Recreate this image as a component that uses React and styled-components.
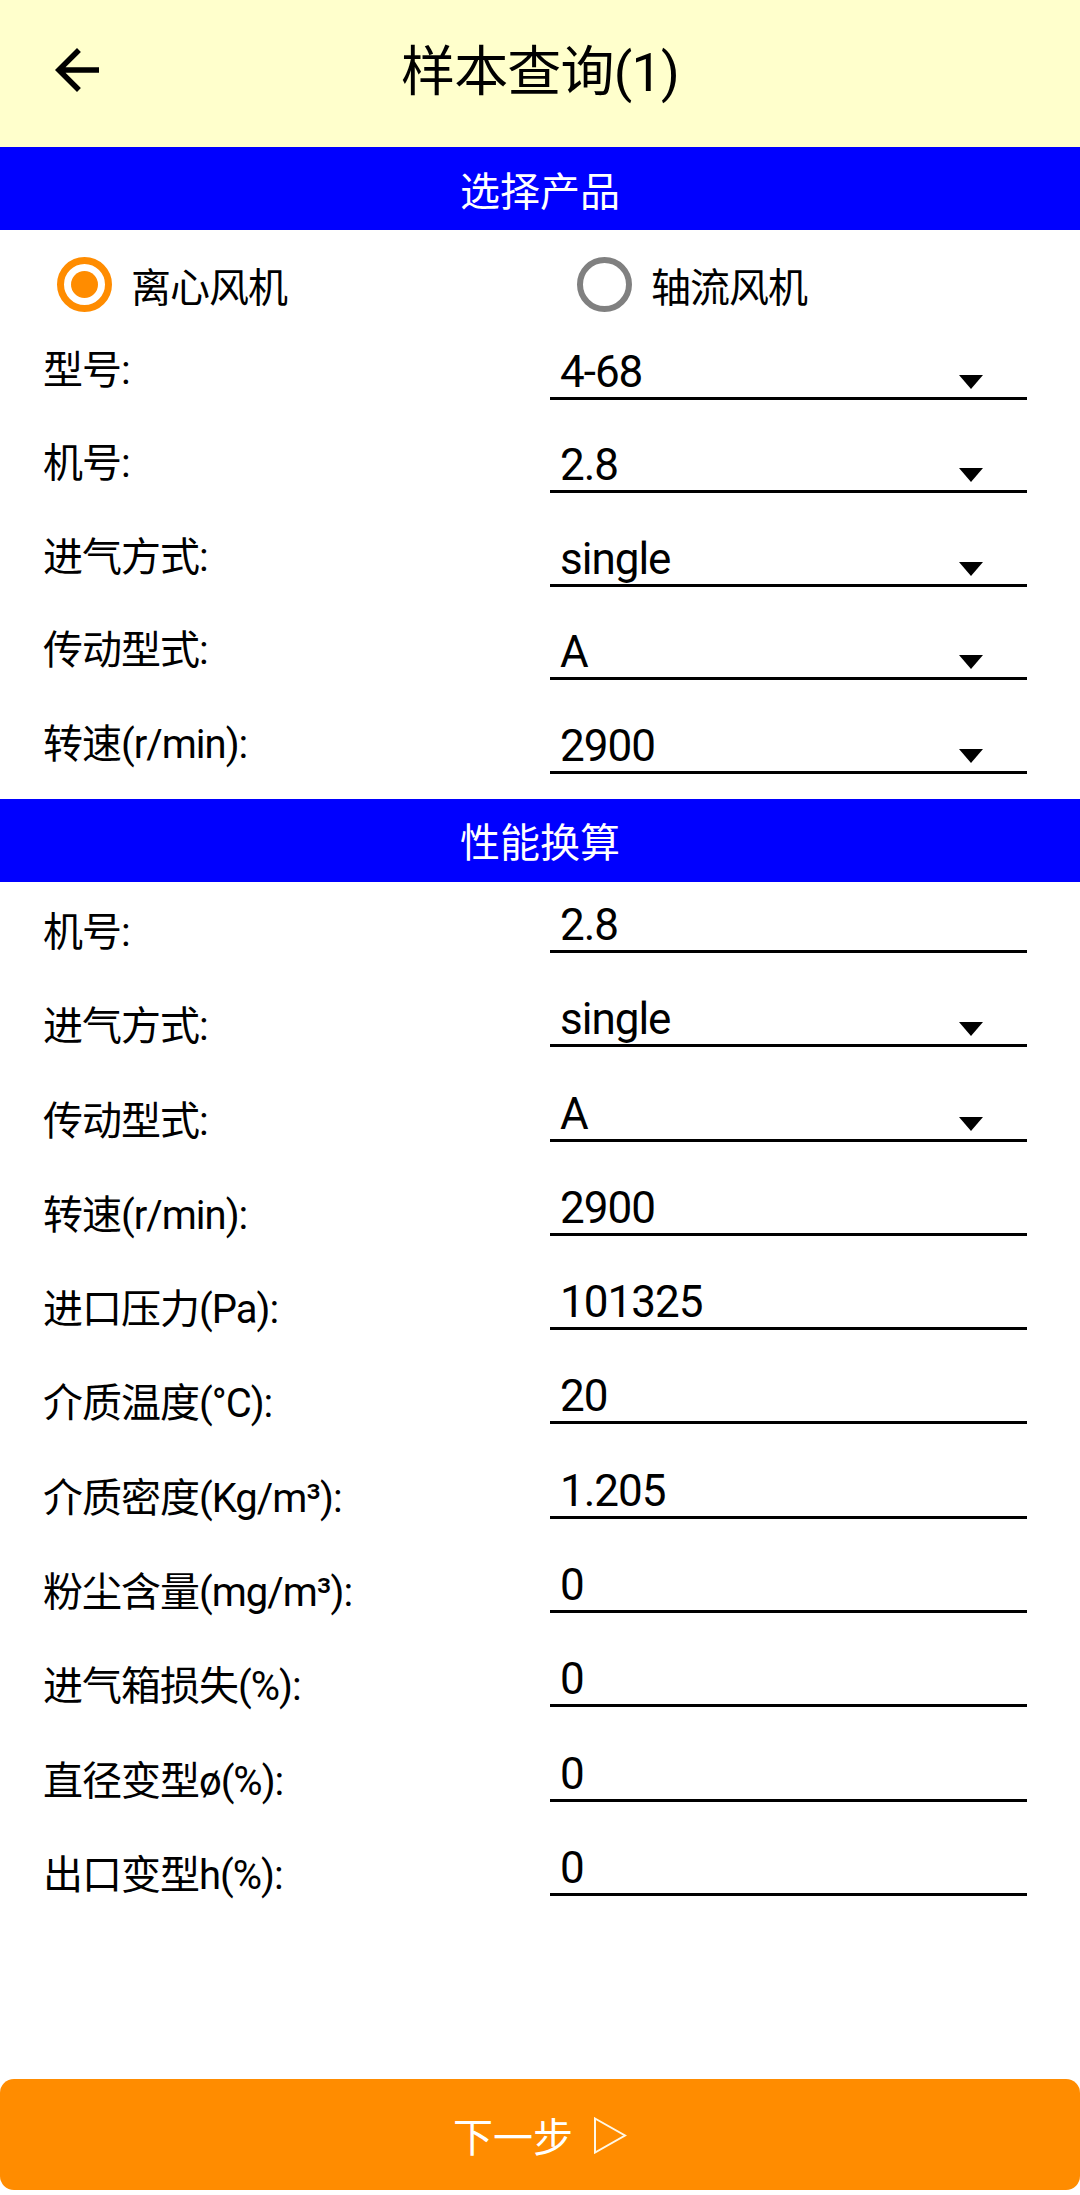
import React, { useState } from 'react';
import styled, { createGlobalStyle } from 'styled-components';

const GlobalStyle = createGlobalStyle`
  * { box-sizing: border-box; }
  body {
    margin: 0;
    background: #fff;
    font-family: Roboto, "Noto Sans CJK SC", sans-serif;
    color: #000;
  }
`;

const selectRows = [
  { label: '型号:', value: '4-68', select: true },
  { label: '机号:', value: '2.8', select: true },
  { label: '进气方式:', value: 'single', select: true },
  { label: '传动型式:', value: 'A', select: true },
  { label: '转速(r/min):', value: '2900', select: true },
];

const convertRows = [
  { label: '机号:', value: '2.8' },
  { label: '进气方式:', value: 'single', select: true },
  { label: '传动型式:', value: 'A', select: true },
  { label: '转速(r/min):', value: '2900' },
  { label: '进口压力(Pa):', value: '101325' },
  { label: '介质温度(°C):', value: '20' },
  { label: '介质密度(Kg/m³):', value: '1.205' },
  { label: '粉尘含量(mg/m³):', value: '0' },
  { label: '进气箱损失(%):', value: '0' },
  { label: '直径变型ø(%):', value: '0' },
  { label: '出口变型h(%):', value: '0' },
];

const BackIcon = () => (
  <svg width="66" height="66" viewBox="0 0 24 24" fill="#000">
    <path d="M20 11H7.83l5.59-5.59L12 4l-8 8 8 8 1.41-1.41L7.83 13H20v-2z" />
  </svg>
);

const NextIcon = () => (
  <svg width="34" height="37" viewBox="0 0 34 37">
    <polygon points="2,1.5 32,18.5 2,35.5" fill="none" stroke="#fff8e6" strokeWidth="2" />
  </svg>
);

const FormRow = ({ label, value, select, section }) => (
  <Row $section={section}>
    <Label $section={section}>{label}</Label>
    <Field>
      <Value>{value}</Value>
      {select && <Caret />}
    </Field>
  </Row>
);

export default function App() {
  const [fanType, setFanType] = useState('centrifugal');

  return (
    <>
      <GlobalStyle />
      <Page>
        <Header>
          <BackButton>
            <BackIcon />
          </BackButton>
          <Title>样本查询(1)</Title>
        </Header>

        <SectionBar>选择产品</SectionBar>
        <RadioGroup>
          <RadioItem onClick={() => setFanType('centrifugal')}>
            <Ring $checked={fanType === 'centrifugal'} />
            <RadioText>离心风机</RadioText>
          </RadioItem>
          <RadioItem onClick={() => setFanType('axial')}>
            <Ring $checked={fanType === 'axial'} />
            <RadioText>轴流风机</RadioText>
          </RadioItem>
        </RadioGroup>
        {selectRows.map((r, i) => (
          <FormRow key={i} section={1} {...r} />
        ))}

        <SectionBar>性能换算</SectionBar>
        {convertRows.map((r, i) => (
          <FormRow key={i} section={2} {...r} />
        ))}

        <Spacer />
        <NextButton>
          下一步
          <NextIcon />
        </NextButton>
      </Page>
    </>
  );
}

const Page = styled.div`
  width: 1080px;
  height: 2195px;
  display: flex;
  flex-direction: column;
  background: #fff;
`;

const Header = styled.header`
  height: 147px;
  background: #ffffcc;
  display: grid;
  grid-template-columns: 1fr auto 1fr;
  align-items: center;
`;

const BackButton = styled.div`
  justify-self: start;
  margin-left: 44px;
  display: flex;
  margin-top: -7px;
`;

const Title = styled.h1`
  margin: 0 0 12px;
  font-size: 54px;
  font-weight: 400;
  letter-spacing: -0.8px;
`;

const SectionBar = styled.div`
  height: 83px;
  background: #0000ff;
  color: #fff;
  font-size: 40px;
  display: flex;
  align-items: center;
  justify-content: center;
`;

const RadioGroup = styled.div`
  height: 101px;
  padding: 8px 20px 0;
  display: grid;
  grid-template-columns: 1fr 1fr;
  align-items: center;
`;

const RadioItem = styled.label`
  display: flex;
  align-items: center;
  margin-left: 37px;
  cursor: pointer;
`;

const Ring = styled.span`
  width: 55px;
  height: 55px;
  border-radius: 50%;
  border: ${(p) => (p.$checked ? '7px solid #ff8c00' : '6px solid #808080')};
  display: flex;
  align-items: center;
  justify-content: center;
  &::after {
    content: '';
    width: 27px;
    height: 27px;
    border-radius: 50%;
    background: #ff8c00;
    display: ${(p) => (p.$checked ? 'block' : 'none')};
  }
`;

const RadioText = styled.span`
  margin-left: 19px;
  font-size: 40px;
  letter-spacing: -1px;
`;

const Row = styled.div`
  height: ${(p) => (p.$section === 1 ? '93.5px' : '94.3px')};
  padding: 0 53px ${(p) => (p.$section === 1 ? '25px' : '22.8px')} 43px;
  display: flex;
  align-items: flex-end;
`;

const Label = styled.div`
  width: 507px;
  font-size: 40px;
  line-height: 40px;
  letter-spacing: -1px;
  padding-bottom: ${(p) => (p.$section === 1 ? '9px' : '0px')};
  white-space: nowrap;
`;

const Field = styled.div`
  flex: 1;
  border-bottom: 3px solid #000;
  padding-left: 10px;
  display: flex;
  align-items: flex-end;
  justify-content: space-between;
`;

const Value = styled.span`
  font-size: 44px;
  line-height: 44px;
  letter-spacing: -1px;
  padding-bottom: 3px;
`;

const Caret = styled.span`
  width: 0;
  height: 0;
  margin: 0 44px 8px 0;
  border-left: 12.5px solid transparent;
  border-right: 12.5px solid transparent;
  border-top: 14px solid #000;
`;

const Spacer = styled.div`
  flex: 1;
`;

const NextButton = styled.button`
  height: 111px;
  margin-bottom: 5px;
  border: none;
  border-radius: 14px;
  background: #ff8c00;
  color: #fff;
  font-family: inherit;
  font-size: 40px;
  display: flex;
  align-items: center;
  justify-content: center;
  gap: 20px;
  svg {
    margin-top: 2px;
  }
`;
